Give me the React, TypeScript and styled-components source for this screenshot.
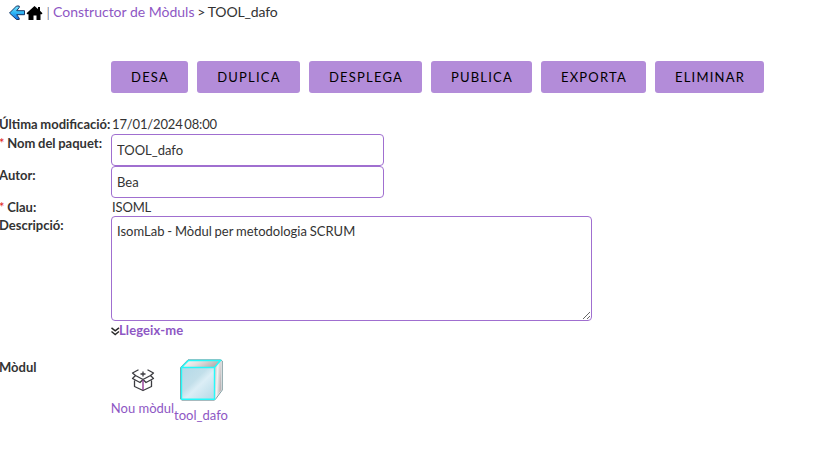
import React from "react";
import styled, { createGlobalStyle } from "styled-components";

const GlobalStyle = createGlobalStyle`
  * { box-sizing: border-box; }
  body {
    margin: 0;
    background: #fff;
    color: #333;
    font: 13px/18px Lato, sans-serif;
    overflow: hidden;
  }
`;

const Page = styled.main`
  width: 832px;
  height: 455px;
`;

const Breadcrumb = styled.nav`
  display: flex;
  align-items: center;
  height: 24px;
  padding-left: 8px;
  font-size: 14px;
  white-space: pre;
  svg { flex: none; margin-top: 2px; }
`;

const Link = styled.a<{ $bold?: boolean }>`
  color: #8e57c4;
  font-weight: ${(p) => (p.$bold ? 700 : 400)};
  text-decoration: none;
`;

const Current = styled.span`
  letter-spacing: -0.15px;
  word-spacing: -0.6px;
`;

const Divider = styled.span`
  width: 1px;
  height: 13px;
  margin: 2px 4px 0 5px;
  background: #98b0d8;
  box-shadow: -1px 0 #f3d9c0;
`;

const Toolbar = styled.div`
  display: flex;
  gap: 9px;
  padding: 37px 0 0 111px;
`;

const Button = styled.button<{ $width: number }>`
  width: ${(p) => p.$width}px;
  height: 32px;
  padding: 0 0 0 1px;
  border: 0;
  border-radius: 3px;
  background: #b38cd9;
  color: #000;
  font: 13px/32px Lato, sans-serif;
  letter-spacing: 1.2px;
  white-space: nowrap;
`;

const Form = styled.div`
  display: grid;
  grid-template-columns: 111px 481px;
  grid-template-rows: 19px 32px 32px 18px 105px 37px 70px;
  margin-top: 22px;
`;

const Label = styled.label`
  margin-left: -1px;
  font-weight: 700;
  white-space: nowrap;
  word-spacing: -0.5px;
`;

const Required = styled.span`
  color: #e02020;
  font-weight: 400;
`;

const Value = styled.span`
  padding-left: 1px;
  letter-spacing: -0.15px;
  word-spacing: -1.5px;
  white-space: nowrap;
`;

const Input = styled.input`
  width: 273px;
  height: 32px;
  padding: 0 5px;
  border: 1px solid #a06fd0;
  border-radius: 4px;
  outline: 0;
  color: #333;
  font: 13px/18px Lato, sans-serif;
`;

const TextArea = styled.textarea`
  display: block;
  width: 481px;
  height: 105px;
  padding: 5px;
  border: 1px solid #a06fd0;
  border-radius: 4px;
  outline: 0;
  color: #333;
  font: 13px/18px Lato, sans-serif;
  word-spacing: -0.5px;
  resize: both;
`;

const Readme = styled.div`
  display: flex;
  letter-spacing: 0.1px;
  svg { margin: 6px -1px 0 0; }
`;

const Modules = styled.div`
  display: flex;
`;

const Module = styled.div<{ $width: number; $top: number; $gap: number }>`
  display: flex;
  flex-direction: column;
  align-items: center;
  width: ${(p) => p.$width}px;
  padding-top: ${(p) => p.$top}px;
  gap: ${(p) => p.$gap}px;
  white-space: nowrap;
`;

const BackIcon = () => (
  <svg width="18" height="16" viewBox="0 0 18 16">
    <defs>
      <linearGradient id="arrow" x2="0" y2="1">
        <stop stopColor="#79e5ff" />
        <stop offset=".5" stopColor="#30b7f5" />
        <stop offset="1" stopColor="#1668df" />
      </linearGradient>
    </defs>
    <path d="M1.5 8 8.5 1h2.7v1.5L8.7 5.7h7.8v4H8.7l2.5 3.5v1.3H8.5z" fill="url(#arrow)" stroke="#173565" />
  </svg>
);

const HomeIcon = () => (
  <svg width="17" height="14" viewBox="0 0 17 14">
    <path d="M8.5 0 12 3V1h2v3.7L16.5 7.3l-.8 1H14.5V14h-4V9.5h-3V14h-5V8.3H1.3l-.8-1z" />
  </svg>
);

const ChevronsIcon = () => (
  <svg width="9" height="9" viewBox="0 0 9 9" fill="none" stroke="#292929" strokeWidth="1.5">
    <path d="m.5.9 3.7 3L8 .9M.5 4.5l3.7 3L8 4.5" />
  </svg>
);

const PackageIcon = () => (
  <svg width="24" height="24" viewBox="0 0 24 24" fill="none" stroke="#3b3b40" strokeWidth="1.3" strokeLinejoin="round">
    <path d="M7.5 1.8 1.5 5 4.5 7.5 1.5 10.5l7.5 4 3-3 3 3 7.5-4-3-3L22.5 5l-6-3.2M4.5 7.5l7.5 4 7.5-4M3.5 12.5v6l8.5 4 8.5-4v-6M12 3.5v5M9.5 6h5" />
    <path d="M12 12v10" stroke="#8c2d91" />
  </svg>
);

const CubeIcon = () => (
  <svg width="44" height="42" viewBox="0 0 44 42">
    <defs>
      <linearGradient id="front" x2="1" y2="1">
        <stop stopColor="#b4d9e8" />
        <stop offset=".4" stopColor="#c2dfea" />
        <stop offset=".55" stopColor="#dceef6" />
        <stop offset="1" stopColor="#b4d9e7" />
      </linearGradient>
      <linearGradient id="top" x1="0" y1="0" x2="1" y2=".3">
        <stop stopColor="#fff" />
        <stop offset=".5" stopColor="#e2dfdf" />
        <stop offset="1" stopColor="#b5b0b0" />
      </linearGradient>
      <linearGradient id="side" x2="1" y2=".3">
        <stop stopColor="#c5bebf" />
        <stop offset=".5" stopColor="#f5f1f1" />
        <stop offset="1" stopColor="#bbb5b7" />
      </linearGradient>
    </defs>
    <path d="M1.5 8.5 9 .8h32.5L43.3 2v29l-7 9.5-1.3.7H3L1.5 40z" fill="#eee" stroke="#819da2" />
    <path d="m2.5 8.5 7-7h32l-6 7z" fill="url(#top)" />
    <path d="m35.5 8.5 6-7L42.3 31l-6.8 9z" fill="url(#side)" />
    <path d="M2.5 8.5h33v31.7h-33z" fill="url(#front)" />
    <path d="M2.5 8.5h33v31.7h-33zM2.5 8.5l7-7h32l-6 7" fill="none" stroke="#25fafa" strokeWidth="1.4" />
  </svg>
);

const actions: [string, number][] = [
  ["DESA", 77],
  ["DUPLICA", 103],
  ["DESPLEGA", 113],
  ["PUBLICA", 101],
  ["EXPORTA", 105],
  ["ELIMINAR", 109],
];

export default function App() {
  return (
    <Page>
      <GlobalStyle />
      <Breadcrumb>
        <BackIcon />
        <HomeIcon />
        <Divider />
        <Link>Constructor de Mòduls</Link>
        <Current> &gt; TOOL_dafo</Current>
      </Breadcrumb>
      <Toolbar>
        {actions.map(([label, width]) => (
          <Button key={label} $width={width}>{label}</Button>
        ))}
      </Toolbar>
      <Form>
        <Label>Última modificació:</Label>
        <Value>17/01/2024 08:00</Value>
        <Label><Required>*</Required> Nom del paquet:</Label>
        <Input defaultValue="TOOL_dafo" />
        <Label>Autor:</Label>
        <Input defaultValue="Bea" />
        <Label><Required>*</Required> Clau:</Label>
        <Value>ISOML</Value>
        <Label>Descripció:</Label>
        <TextArea spellCheck={false} defaultValue="IsomLab - Mòdul per metodologia SCRUM" />
        <span />
        <Readme>
          <ChevronsIcon />
          <Link $bold>Llegeix-me</Link>
        </Readme>
        <Label>Mòdul</Label>
        <Modules>
          <Module $width={63} $top={10} $gap={7}>
            <PackageIcon />
            <Link>Nou mòdul</Link>
          </Module>
          <Module $width={54} $top={1} $gap={5}>
            <CubeIcon />
            <Link>tool_dafo</Link>
          </Module>
        </Modules>
      </Form>
    </Page>
  );
}
